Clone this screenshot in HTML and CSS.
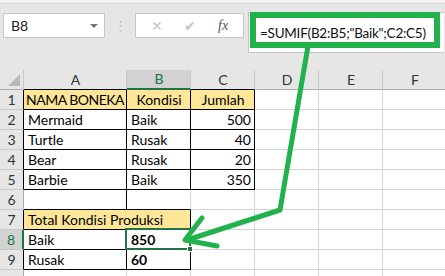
FILE: index.html
```html
<!DOCTYPE html>
<html lang="id">
<head>
    <meta charset="UTF-8">
    <title>SUMIF - Kondisi Boneka</title>
    <link rel="stylesheet" href="styles.css">
</head>
<body>
    <div class="sheet-window">
        <div class="ribbon-edge"></div>

        <div class="formula-bar">
            <div class="name-box">
                <span>B8</span>
                <span class="caret"></span>
            </div>
            <div class="grip">&#8942;</div>
            <div class="fx-box">
                <span class="fx-cancel">&#10005;</span>
                <span class="fx-enter">&#10004;</span>
                <span class="fx-label">fx</span>
            </div>
            <div class="formula-input">
                <span class="formula-text">=SUMIF(B2:B5;"Baik";C2:C5)</span>
            </div>
            <div class="formula-highlight"></div>
        </div>

        <table class="grid">
            <colgroup>
                <col class="col-rowhead">
                <col class="col-a">
                <col class="col-std">
                <col class="col-std">
                <col class="col-std">
                <col class="col-std">
                <col class="col-std">
            </colgroup>
            <thead>
                <tr>
                    <th class="corner"><span class="corner-tri"></span></th>
                    <th class="colhead edge">A</th>
                    <th class="colhead active">B</th>
                    <th class="colhead edge">C</th>
                    <th class="colhead">D</th>
                    <th class="colhead">E</th>
                    <th class="colhead">F</th>
                </tr>
            </thead>
            <tbody>
                <tr>
                    <th class="rowhead boxed">1</th>
                    <td class="box gold center caps">NAMA BONEKA</td>
                    <td class="box gold center">Kondisi</td>
                    <td class="box gold center">Jumlah</td>
                    <td></td><td></td><td></td>
                </tr>
                <tr>
                    <th class="rowhead boxed">2</th>
                    <td class="box">Mermaid</td>
                    <td class="box">Baik</td>
                    <td class="box num">500</td>
                    <td></td><td></td><td></td>
                </tr>
                <tr>
                    <th class="rowhead boxed">3</th>
                    <td class="box">Turtle</td>
                    <td class="box">Rusak</td>
                    <td class="box num">40</td>
                    <td></td><td></td><td></td>
                </tr>
                <tr>
                    <th class="rowhead boxed">4</th>
                    <td class="box">Bear</td>
                    <td class="box">Rusak</td>
                    <td class="box num">20</td>
                    <td></td><td></td><td></td>
                </tr>
                <tr>
                    <th class="rowhead boxed">5</th>
                    <td class="box">Barbie</td>
                    <td class="box">Baik</td>
                    <td class="box num">350</td>
                    <td></td><td></td><td></td>
                </tr>
                <tr>
                    <th class="rowhead">6</th>
                    <td class="line-right line-bottom"></td>
                    <td class="line-bottom"></td>
                    <td></td>
                    <td></td><td></td><td></td>
                </tr>
                <tr>
                    <th class="rowhead boxed">7</th>
                    <td class="box gold" colspan="2">Total Kondisi Produksi</td>
                    <td></td>
                    <td></td><td></td><td></td>
                </tr>
                <tr>
                    <th class="rowhead active">8</th>
                    <td class="box">Baik</td>
                    <td class="box bold selected">850<span class="selection"><span class="fill-handle"></span></span></td>
                    <td></td>
                    <td></td><td></td><td></td>
                </tr>
                <tr>
                    <th class="rowhead boxed">9</th>
                    <td class="box">Rusak</td>
                    <td class="box bold">60</td>
                    <td></td>
                    <td></td><td></td><td></td>
                </tr>
                <tr>
                    <th class="rowhead"></th>
                    <td></td><td></td><td></td>
                    <td></td><td></td><td></td>
                </tr>
            </tbody>
        </table>

        <!-- annotation arrow from the formula to B8 -->
        <svg class="callout" width="445" height="276" viewBox="0 0 445 276">
            <path d="M308 46 L280 210 L187 240" fill="none" stroke="#22b24c" stroke-width="5" stroke-linejoin="round"/>
            <path d="M202 218 L185 240 L217 246" fill="none" stroke="#22b24c" stroke-width="5" stroke-linecap="round" stroke-linejoin="round"/>
        </svg>
    </div>
</body>
</html>
```

FILE: styles.css
```css
* {
    box-sizing: border-box;
}
body {
    margin: 0;
    background-color: #ffffff;
    font-family: Lato, "Liberation Sans", sans-serif;
    overflow: hidden;
}
.sheet-window {
    position: relative;
    width: 445px;
    height: 276px;
    overflow: hidden;
}
.ribbon-edge {
    height: 4px;
    background-color: #f3f3f3;
    border-bottom: 1px solid #d4d4d4;
}
.formula-bar {
    position: relative;
    display: flex;
    align-items: flex-start;
    height: 66px;
    padding: 9px 0 0 3px;
    background-color: #e6e6e6;
}
.name-box {
    display: flex;
    align-items: center;
    justify-content: space-between;
    width: 102px;
    height: 25px;
    padding: 0 6px 0 7px;
    background-color: #ffffff;
    border: 1px solid #c6c6c6;
    font-size: 14px;
    color: #222;
}
.caret {
    width: 0;
    height: 0;
    border-left: 4px solid transparent;
    border-right: 4px solid transparent;
    border-top: 4px solid #777;
}
.grip {
    width: 30px;
    line-height: 25px;
    text-align: center;
    color: #c0c0c0;
    font-size: 13px;
}
.fx-box {
    display: flex;
    align-items: center;
    justify-content: space-around;
    width: 109px;
    height: 25px;
    padding: 0 4px;
    background-color: #ffffff;
    border: 1px solid #c6c6c6;
}
.fx-cancel, .fx-enter {
    color: #c4c4c4;
    font-size: 14px;
}
.fx-label {
    font-family: "Liberation Serif", serif;
    font-style: italic;
    font-size: 14px;
    color: #555;
}
.formula-input {
    width: 196px;
    height: 41px;
    margin: -1px 0 0 4px;
    padding: 9px 0 0 11px;
    background-color: #ffffff;
    border: 1px solid #c6c6c6;
    border-right: none;
}
.formula-text {
    font-size: 13.5px;
    letter-spacing: -0.25px;
    color: #111;
    white-space: nowrap;
}
.formula-highlight {
    position: absolute;
    left: 250px;
    top: 8px;
    width: 190px;
    height: 36px;
    border: 6px solid #22b24c;
}
.grid {
    border-collapse: separate;
    border-spacing: 0;
    table-layout: fixed;
    width: 447px;
    font-size: 14px;
    color: #000;
}
.col-rowhead { width: 24px; }
.col-a { width: 103px; }
.col-std { width: 64px; }
.grid th, .grid td {
    height: 20px;
    padding: 0 3px 0 4px;
    border-right: 1px solid #d4d4d4;
    border-bottom: 1px solid #d4d4d4;
    white-space: nowrap;
    overflow: hidden;
    line-height: 19px;
    vertical-align: bottom;
}
.grid thead th {
    height: 19px;
    font-weight: normal;
    font-size: 14px;
    color: #333;
    text-align: center;
    line-height: 18px;
    background-color: #e6e6e6;
    border-right: 1px solid #c8c8c8;
    border-bottom: 1px solid #ababab;
}
.grid thead th.edge {
    border-bottom-color: #000;
}
.grid thead th.active {
    background-color: #d2d2d2;
    color: #217346;
    border-bottom: 2px solid #217346;
}
.corner {
    position: relative;
}
.corner-tri {
    position: absolute;
    right: 3px;
    bottom: 3px;
    width: 0;
    height: 0;
    border-left: 12px solid transparent;
    border-bottom: 12px solid #b8b8b8;
}
.grid .rowhead {
    padding: 0;
    font-weight: normal;
    font-size: 14px;
    color: #333;
    text-align: center;
    background-color: #e6e6e6;
    border-bottom: 1px solid #c8c8c8;
    border-right: 1px solid #ababab;
}
.grid .rowhead.boxed {
    border-right-color: #000;
}
.grid .rowhead.active {
    background-color: #d2d2d2;
    color: #217346;
    border-right: 2px solid #217346;
}
.grid td.box {
    border-right-color: #000;
    border-bottom-color: #000;
}
.grid td.line-right {
    border-right-color: #000;
}
.grid td.line-bottom {
    border-bottom-color: #000;
}
.gold {
    background-color: #ffe699;
}
.center {
    text-align: center;
}
.grid td.caps {
    padding: 0;
    letter-spacing: -0.5px;
}
.num {
    text-align: right;
}
.bold {
    font-weight: bold;
}
.grid td.selected {
    position: relative;
    overflow: visible;
}
.selection {
    position: absolute;
    left: -2px;
    top: -2px;
    right: -1px;
    bottom: -1px;
    border: 2px solid #217346;
}
.fill-handle {
    position: absolute;
    right: -4px;
    bottom: -4px;
    width: 6px;
    height: 6px;
    background-color: #217346;
    border: 1px solid #ffffff;
}
.callout {
    position: absolute;
    left: 0;
    top: 0;
    pointer-events: none;
}
```
